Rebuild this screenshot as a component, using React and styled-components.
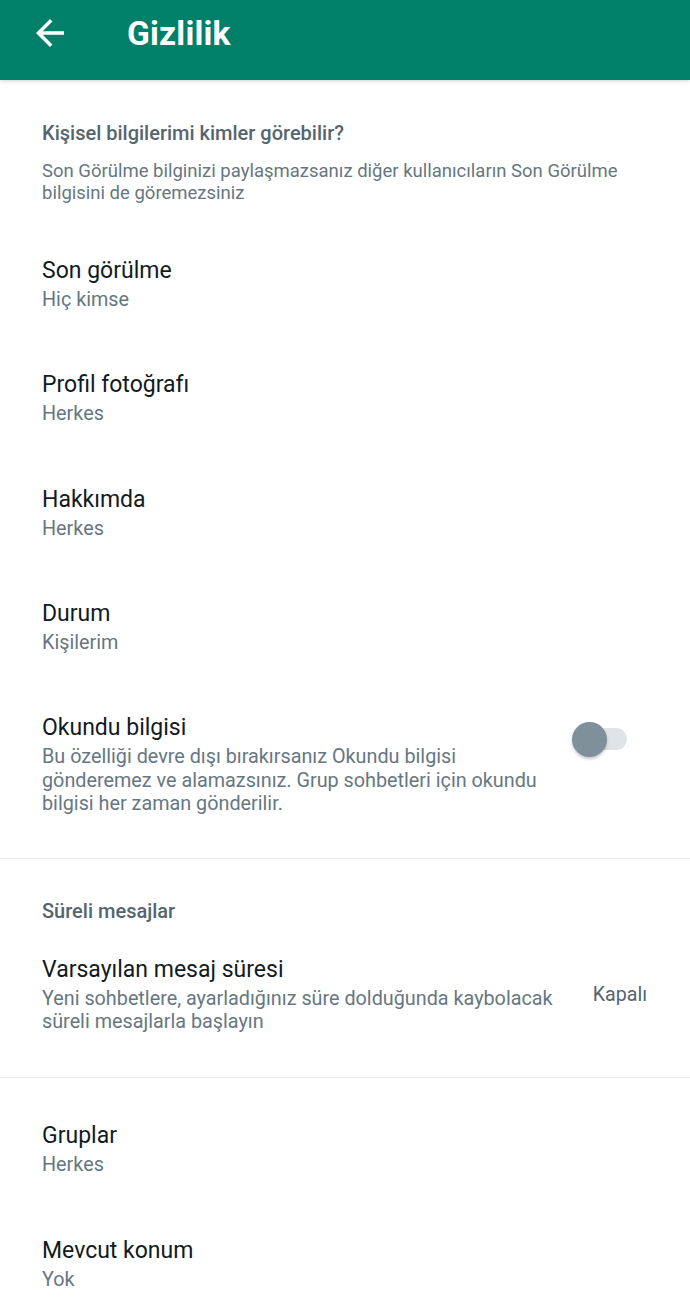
import React from "react";
import styled, { createGlobalStyle } from "styled-components";

const GlobalStyle = createGlobalStyle`
  html, body {
    margin: 0;
    padding: 0;
    background: #ffffff;
  }
  body {
    font-family: Roboto, "Noto Sans", sans-serif;
    -webkit-font-smoothing: antialiased;
  }
`;

const Page = styled.div`
  width: 690px;
  min-height: 1315px;
  background: #ffffff;
`;

const Header = styled.header`
  height: 80px;
  background: #008069;
  display: flex;
  align-items: center;
  position: relative;
  z-index: 1;
  box-shadow: 0 1px 4px rgba(0, 0, 0, 0.18);
`;

const BackButton = styled.button`
  border: 0;
  background: transparent;
  padding: 0;
  margin: -14px 0 0 29px;
  width: 42px;
  height: 42px;
  display: flex;
  color: #ffffff;
`;

const Title = styled.h1`
  margin: -13px 0 0 56px;
  font-size: 33.5px;
  font-weight: 700;
  color: #ffffff;
  letter-spacing: 0.2px;
`;

const Section = styled.section`
  padding: ${(p) => p.$pad || "40px 0 0"};
  border-bottom: ${(p) => (p.$divider ? "1px solid #eceff1" : "none")};
`;

const SectionTitle = styled.h2`
  margin: 0 42px;
  font-size: 20px;
  line-height: 24px;
  font-weight: 500;
  color: #54656f;
`;

const SectionNote = styled.p`
  margin: 15px 42px 0;
  font-size: 18.5px;
  line-height: 22px;
  color: #667781;
`;

const List = styled.div`
  margin-top: ${(p) => p.$top || 0}px;
`;

const Item = styled.div`
  display: flex;
  align-items: flex-start;
  padding: ${(p) => p.$pad || "28.75px 42px"};
  gap: 24px;
`;

const ItemText = styled.div`
  flex: 1;
  min-width: 0;
`;

const ItemTitle = styled.div`
  font-size: 23px;
  line-height: 28px;
  color: #111b21;
`;

const ItemValue = styled.div`
  font-size: 19.8px;
  line-height: 29px;
  color: #667781;
`;

const ItemDesc = styled.div`
  margin-top: 3px;
  font-size: 19.8px;
  line-height: 23.5px;
  color: #667781;
`;

const SideValue = styled.div`
  margin-top: 26px;
  margin-right: 1px;
  font-size: 19.6px;
  line-height: 26px;
  color: #54656f;
`;

const Switch = styled.div`
  position: relative;
  width: 55px;
  height: 35px;
  margin: 8px 21px 0 0;
  flex-shrink: 0;
`;

const Track = styled.div`
  position: absolute;
  left: 1px;
  right: 0;
  top: 6px;
  height: 22px;
  border-radius: 11px;
  background: #dfe4e7;
`;

const Knob = styled.div`
  position: absolute;
  left: 0;
  top: 0;
  width: 35px;
  height: 35px;
  border-radius: 50%;
  background: #80909b;
  box-shadow: 0 2px 3px rgba(0, 0, 0, 0.22);
`;

const simpleItems = [
  ["Son görülme", "Hiç kimse"],
  ["Profil fotoğrafı", "Herkes"],
  ["Hakkımda", "Herkes"],
  ["Durum", "Kişilerim"],
];

const ArrowBack = () => (
  <svg width="42" height="42" viewBox="0 0 24 24" fill="currentColor">
    <path d="M20 11H7.83l5.59-5.59L12 4l-8 8 8 8 1.41-1.41L7.83 13H20v-2z" />
  </svg>
);

export default function App() {
  return (
    <Page>
      <GlobalStyle />
      <Header>
        <BackButton aria-label="Geri">
          <ArrowBack />
        </BackButton>
        <Title>Gizlilik</Title>
      </Header>

      <Section $pad="41px 0 0" $divider>
        <SectionTitle>Kişisel bilgilerimi kimler görebilir?</SectionTitle>
        <SectionNote>
          Son Görülme bilginizi paylaşmazsanız diğer kullanıcıların Son Görülme
          bilgisini de göremezsiniz
        </SectionNote>
        <List $top={24}>
          {simpleItems.map(([title, value]) => (
            <Item key={title}>
              <ItemText>
                <ItemTitle>{title}</ItemTitle>
                <ItemValue>{value}</ItemValue>
              </ItemText>
            </Item>
          ))}
          <Item $pad="28px 42px 42px">
            <ItemText>
              <ItemTitle>Okundu bilgisi</ItemTitle>
              <ItemDesc>
                Bu özelliği devre dışı bırakırsanız Okundu bilgisi gönderemez ve
                alamazsınız. Grup sohbetleri için okundu bilgisi her zaman
                gönderilir.
              </ItemDesc>
            </ItemText>
            <Switch>
              <Track />
              <Knob />
            </Switch>
          </Item>
        </List>
      </Section>

      <Section $pad="40px 0 0" $divider>
        <SectionTitle>Süreli mesajlar</SectionTitle>
        <List $top={5}>
          <Item $pad="28px 42px 43px">
            <ItemText>
              <ItemTitle>Varsayılan mesaj süresi</ItemTitle>
              <ItemDesc>
                Yeni sohbetlere, ayarladığınız süre dolduğunda kaybolacak
                süreli mesajlarla başlayın
              </ItemDesc>
            </ItemText>
            <SideValue>Kapalı</SideValue>
          </Item>
        </List>
      </Section>

      <List $top={16}>
        <Item>
          <ItemText>
            <ItemTitle>Gruplar</ItemTitle>
            <ItemValue>Herkes</ItemValue>
          </ItemText>
        </Item>
        <Item>
          <ItemText>
            <ItemTitle>Mevcut konum</ItemTitle>
            <ItemValue>Yok</ItemValue>
          </ItemText>
        </Item>
      </List>
    </Page>
  );
}
